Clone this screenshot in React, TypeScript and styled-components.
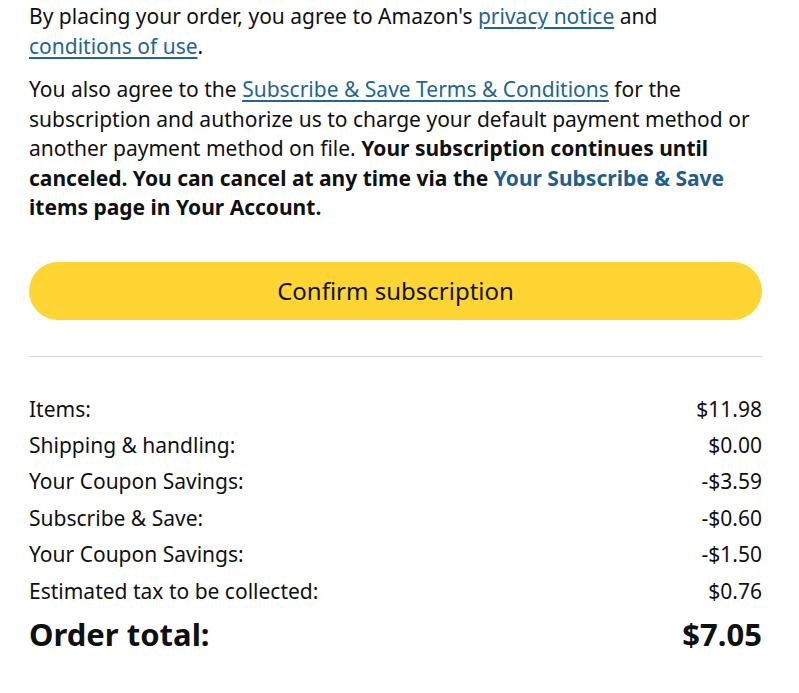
import styled, { createGlobalStyle } from "styled-components";

const GlobalStyle = createGlobalStyle`
  html, body {
    margin: 0;
    padding: 0;
    background: #ffffff;
  }
  body {
    font-family: "Noto Sans", "Open Sans", Arial, sans-serif;
    color: #0f1111;
  }
`;

const Page = styled.div`
  width: 733px;
  padding: 2px 37px 0 29px;
`;

const Paragraph = styled.p`
  margin: 0 0 14px;
  font-size: 21px;
  line-height: 29.5px;
`;

const Link = styled.a`
  color: #236592;
  text-decoration: underline;
  text-underline-offset: 3px;
`;

const BoldLink = styled.span`
  color: #205f8d;
  font-weight: 700;
`;

const ConfirmButton = styled.button`
  display: block;
  width: 100%;
  height: 58px;
  margin-top: 39px;
  border: none;
  border-radius: 29px;
  background: #ffd534;
  color: #0f1111;
  font-family: inherit;
  font-size: 24px;
  cursor: pointer;
`;

const Divider = styled.hr`
  margin: 36px 0 34px;
  border: none;
  border-top: 1px solid #d5d9d9;
`;

const Summary = styled.div`
  display: flex;
  flex-direction: column;
`;

const Row = styled.div<{ total?: boolean }>`
  display: flex;
  justify-content: space-between;
  align-items: center;
  font-size: ${(p) => (p.total ? "31px" : "21px")};
  font-weight: ${(p) => (p.total ? 700 : 400)};
  height: ${(p) => (p.total ? "50px" : "36.4px")};
`;

const rows = [
  ["Items:", "$11.98"],
  ["Shipping & handling:", "$0.00"],
  ["Your Coupon Savings:", "-$3.59"],
  ["Subscribe & Save:", "-$0.60"],
  ["Your Coupon Savings:", "-$1.50"],
  ["Estimated tax to be collected:", "$0.76"],
];

const App = () => {
  return (
    <>
      <GlobalStyle />
      <Page>
        <Paragraph>
          By placing your order, you agree to Amazon's{" "}
          <Link href="#">privacy notice</Link> and{" "}
          <Link href="#">conditions of use</Link>.
        </Paragraph>
        <Paragraph>
          You also agree to the{" "}
          <Link href="#">Subscribe &amp; Save Terms &amp; Conditions</Link> for
          the subscription and authorize us to charge your default payment
          method or another payment method on file.{" "}
          <b>
            Your subscription continues until canceled. You can cancel at any
            time via the <BoldLink>Your Subscribe &amp; Save</BoldLink> items
            page in Your Account.
          </b>
        </Paragraph>
        <ConfirmButton>Confirm subscription</ConfirmButton>
        <Divider />
        <Summary>
          {rows.map(([label, value], i) => (
            <Row key={i}>
              <span>{label}</span>
              <span>{value}</span>
            </Row>
          ))}
          <Row total>
            <span>Order total:</span>
            <span>$7.05</span>
          </Row>
        </Summary>
      </Page>
    </>
  );
};

export default App;
